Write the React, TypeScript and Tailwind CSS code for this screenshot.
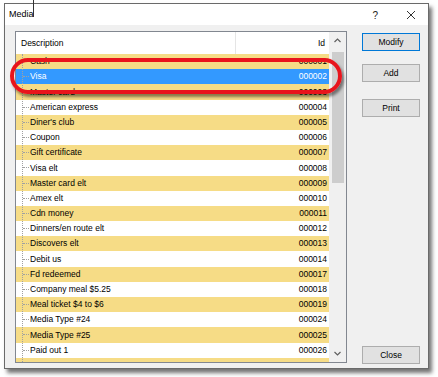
import React from "react";

type MediaRow = { name: string; id: string };

const mediaRows: MediaRow[] = [
    { name: "Cash", id: "000001" },
    { name: "Visa", id: "000002" },
    { name: "Master card", id: "000003" },
    { name: "American express", id: "000004" },
    { name: "Diner's club", id: "000005" },
    { name: "Coupon", id: "000006" },
    { name: "Gift certificate", id: "000007" },
    { name: "Visa elt", id: "000008" },
    { name: "Master card elt", id: "000009" },
    { name: "Amex elt", id: "000010" },
    { name: "Cdn money", id: "000011" },
    { name: "Dinners/en route elt", id: "000012" },
    { name: "Discovers elt", id: "000013" },
    { name: "Debit us", id: "000014" },
    { name: "Fd redeemed", id: "000017" },
    { name: "Company meal $5.25", id: "000018" },
    { name: "Meal ticket $4 to $6", id: "000019" },
    { name: "Media Type #24", id: "000024" },
    { name: "Media Type #25", id: "000025" },
    { name: "Paid out 1", id: "000026" },
];

function DialogButton({ label, isDefault, className }: { label: string; isDefault?: boolean; className?: string }) {
    return (
        <button
            className={
                "w-[58px] h-[18px] bg-[#e1e1e1] text-[8.5px] text-black flex items-center justify-center " +
                (isDefault ? "border border-[#0078d7] " : "border border-[#adadad] ") +
                (className ?? "")
            }
        >
            {label}
        </button>
    );
}

function App() {
    const selectedId = "000002";

    return (
        <div className="relative w-[438px] h-[377px] bg-white overflow-hidden font-['Liberation_Sans',Arial,sans-serif]">

            {/* text cursor left in the screenshot */}
            <div className="absolute left-[33px] top-0 w-px h-[17px] bg-[#333]" />

            <div className="ml-[4px] mt-[3px] w-[425px] h-[366px] border border-[#6a6a6a] flex flex-col shadow-[3px_4px_4px_rgba(0,0,0,0.55)]">

                {/* title bar */}
                <div className="h-[21px] bg-white flex items-center pl-[4px] pr-[10px] pt-[1px]">
                    <span className="text-[9px] text-black">Media</span>
                    <span className="ml-auto text-[10px] text-[#222] mr-[28px]">?</span>
                    <svg width="10" height="10" viewBox="0 0 10 10" className="mr-[2px]">
                        <path d="M1 1 L9 9 M9 1 L1 9" stroke="#333" strokeWidth="1" fill="none" />
                    </svg>
                </div>

                {/* body */}
                <div className="flex-1 bg-[#f0f0f0] flex pt-[6px] pl-[10px] pb-[4px]">

                    {/* list */}
                    <div className="relative w-[332px] h-[332px] border border-[#828790] bg-white flex">
                        <div className="w-[314px] flex flex-col">
                            <div className="h-[22px] flex text-[8.5px] text-black shrink-0">
                                <div className="w-[220px] border-r border-[#e5e5e5] flex items-center pl-[5px]">
                                    Description
                                </div>
                                <div className="flex-1 flex items-center justify-end pr-[4px]">
                                    Id
                                </div>
                            </div>
                            <div className="relative flex-1 overflow-hidden">
                                <div className="absolute left-[6px] top-0 bottom-0 border-l border-dotted border-[#a0a0a0]" />
                                {mediaRows.map((row, index) => {
                                    const selected = row.id === selectedId;
                                    const bg = selected ? "bg-[#3399ff] text-white" : index % 2 === 0 ? "bg-[#f6dc86] text-black" : "bg-white text-black";
                                    return (
                                        <div key={row.id} className={"h-[15.2px] flex items-center text-[8.5px] " + bg}>
                                            <div className="w-[7px] shrink-0" />
                                            <div className="w-[6px] shrink-0 border-t border-dotted border-[#a0a0a0]" />
                                            <div className="flex-1 pl-[1px]">{row.name}</div>
                                            <div className="pr-[2px]">{row.id}</div>
                                        </div>
                                    );
                                })}
                                {/* next row, scrolled out of view */}
                                <div className="h-[15.2px] bg-[#f6dc86]" />
                            </div>
                        </div>

                        {/* scrollbar */}
                        <div className="w-[17px] bg-[#f0f0f0] flex flex-col items-center">
                            <div className="h-[17px] flex items-center justify-center">
                                <svg width="7" height="5" viewBox="0 0 7 5">
                                    <path d="M0.5 4 L3.5 1 L6.5 4" stroke="#606060" strokeWidth="1.2" fill="none" />
                                </svg>
                            </div>
                            <div className="mt-[3px] w-[12px] h-[131px] bg-[#cdcdcd]" />
                            <div className="mt-auto h-[17px] flex items-center justify-center">
                                <svg width="7" height="5" viewBox="0 0 7 5">
                                    <path d="M0.5 1 L3.5 4 L6.5 1" stroke="#606060" strokeWidth="1.2" fill="none" />
                                </svg>
                            </div>
                        </div>

                        {/* red highlight ring */}
                        <div className="absolute left-[-6px] top-[26px] w-[332px] h-[36px] rounded-full border-[4px] border-[#e8141c] shadow-[2px_3px_3px_rgba(0,0,0,0.45)]" />
                    </div>

                    {/* buttons */}
                    <div className="ml-[15px] flex flex-col pt-[2px]">
                        <DialogButton label="Modify" isDefault />
                        <DialogButton label="Add" className="mt-[13px]" />
                        <DialogButton label="Print" className="mt-[17px]" />
                        <DialogButton label="Close" className="mt-auto" />
                    </div>
                </div>
            </div>
        </div>
    );
}

export default App;
